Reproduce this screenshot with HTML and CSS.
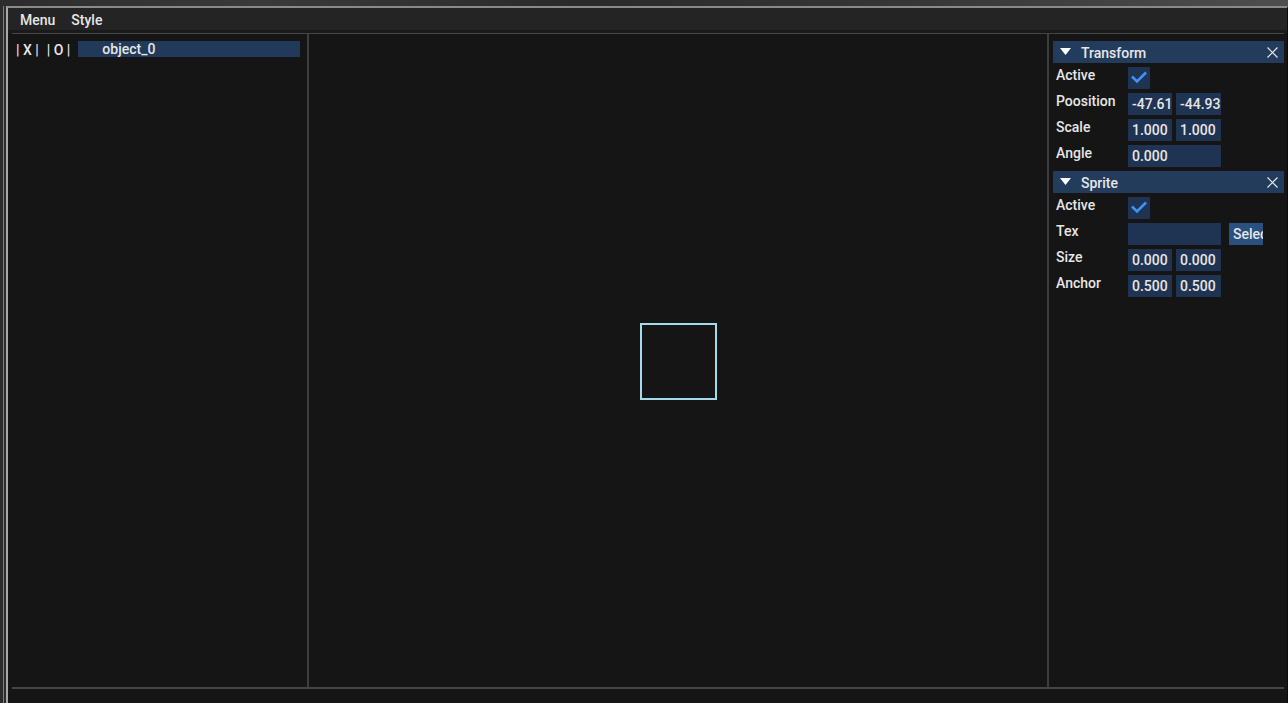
FILE: index.html
```html
<!DOCTYPE html>
<html lang="en">
<head>
    <meta charset="UTF-8">
    <meta name="viewport" content="width=device-width, initial-scale=1.0">
    <link rel="stylesheet" href="styles.css">
</head>
<body>
    <div class="frame">
        <div class="window">
            <div class="menubar">
                <span class="menu-item">Menu</span>
                <span class="menu-item">Style</span>
            </div>
            <div class="rule-gap"><div class="rule"></div></div>

            <div class="panels">
                <div class="panel hierarchy">
                    <div class="obj-row">
                        <span class="tool">| X |</span>
                        <span class="tool">| O |</span>
                        <div class="obj selected">object_0</div>
                    </div>
                </div>

                <div class="divider"></div>

                <div class="panel viewport">
                    <div class="sprite-box"></div>
                </div>

                <div class="divider"></div>

                <div class="panel inspector">
                    <div class="comp-head">
                        <svg class="arrow" width="12" height="8" viewBox="0 0 12 8"><polygon points="0,0 11,0 5.5,7" fill="#ffffff"/></svg>
                        <span class="comp-title">Transform</span>
                        <svg class="close" width="11" height="11" viewBox="0 0 11 11"><path d="M0.5 0.5 L10.5 10.5 M10.5 0.5 L0.5 10.5" stroke="#e8e8e8" stroke-width="1.2"/></svg>
                    </div>
                    <div class="prop">
                        <span class="prop-label">Active</span>
                        <div class="check"><svg width="22" height="22" viewBox="0 0 22 22"><path d="M4 9.5 L9 14.5 L18 5.5" fill="none" stroke="#3f93f3" stroke-width="2.6"/></svg></div>
                    </div>
                    <div class="prop">
                        <span class="prop-label">Poosition</span>
                        <div class="field w44">-47.61</div>
                        <div class="field w45">-44.932</div>
                    </div>
                    <div class="prop">
                        <span class="prop-label">Scale</span>
                        <div class="field w44">1.000</div>
                        <div class="field w45">1.000</div>
                    </div>
                    <div class="prop">
                        <span class="prop-label">Angle</span>
                        <div class="field w93">0.000</div>
                    </div>

                    <div class="comp-head">
                        <svg class="arrow" width="12" height="8" viewBox="0 0 12 8"><polygon points="0,0 11,0 5.5,7" fill="#ffffff"/></svg>
                        <span class="comp-title">Sprite</span>
                        <svg class="close" width="11" height="11" viewBox="0 0 11 11"><path d="M0.5 0.5 L10.5 10.5 M10.5 0.5 L0.5 10.5" stroke="#e8e8e8" stroke-width="1.2"/></svg>
                    </div>
                    <div class="prop">
                        <span class="prop-label">Active</span>
                        <div class="check"><svg width="22" height="22" viewBox="0 0 22 22"><path d="M4 9.5 L9 14.5 L18 5.5" fill="none" stroke="#3f93f3" stroke-width="2.6"/></svg></div>
                    </div>
                    <div class="prop">
                        <span class="prop-label">Tex</span>
                        <div class="field w93"></div>
                        <div class="btn">Select</div>
                    </div>
                    <div class="prop">
                        <span class="prop-label">Size</span>
                        <div class="field w44">0.000</div>
                        <div class="field w45">0.000</div>
                    </div>
                    <div class="prop">
                        <span class="prop-label">Anchor</span>
                        <div class="field w44">0.500</div>
                        <div class="field w45">0.500</div>
                    </div>
                </div>
            </div>

            <div class="rule-bottom"><div class="rule thick"></div></div>
            <div class="footer"></div>
        </div>
    </div>
</body>
</html>
```

FILE: styles.css
```css
* {
    margin: 0;
    padding: 0;
    box-sizing: border-box;
}

body {
    font-family: Roboto, "Liberation Sans", sans-serif;
    font-size: 14px;
    font-weight: 500;
    color: #e6e6e6;
    height: 100vh;
    overflow: hidden;
    padding: 6px 0 0 3px;
    background: linear-gradient(90deg, #2c2c2c 0%, #3a3a3a 20%, #2a2a2a 45%, #363636 70%, #4e4e4e 100%);
}

.frame {
    height: 100%;
    border-left: 1px solid #7e7e7e;
    padding-left: 2px;
}

.window {
    height: 100%;
    display: flex;
    flex-direction: column;
    background-color: #151515;
    border-top: 2px solid #8a8a8a;
    border-left: 2px solid #a8a8a8;
    border-right: 1px solid #0b0b0b;
}

.menubar {
    height: 22px;
    display: flex;
    align-items: center;
    gap: 16px;
    padding: 2px 0 0 12px;
    background-color: #242424;
}

.rule-gap {
    height: 4px;
    padding: 3px 3px 0 4px;
    background-color: #1a1a1a;
}

.rule {
    height: 1px;
    background-color: #454548;
}

.rule.thick {
    height: 2px;
}

.rule-bottom {
    padding: 0 3px 0 4px;
}

.footer {
    flex: 1;
}

.panels {
    height: 653px;
    display: flex;
}

.divider {
    width: 2px;
    background-color: #3d3d41;
}

.hierarchy {
    width: 299px;
    padding: 7px 7px 0 8px;
}

.obj-row {
    display: flex;
    align-items: center;
    gap: 8px;
    height: 16px;
}

.tool {
    padding-top: 1px;
}

.obj {
    flex: 1;
    height: 16px;
    line-height: 17px;
    padding-left: 24px;
}

.selected {
    background-color: #223a59;
}

.viewport {
    width: 738px;
    display: flex;
    align-items: center;
    justify-content: center;
    padding-top: 1px;
}

.sprite-box {
    width: 77px;
    height: 77px;
    border: 2px solid #a2dbec;
}

.inspector {
    width: 238px;
    padding: 7px 3px 0 4px;
    display: flex;
    flex-direction: column;
    gap: 4px;
}

.comp-head {
    height: 22px;
    display: flex;
    align-items: center;
    background-color: #233c5c;
    padding: 0 6px 0 7px;
}

.arrow {
    margin-right: 9px;
}

.comp-title {
    flex: 1;
    padding-top: 2px;
}

.prop {
    height: 22px;
    display: flex;
    gap: 4px;
    padding-left: 3px;
}

.prop-label {
    width: 68px;
    line-height: 16px;
    padding-top: 0;
}

.check {
    width: 22px;
    height: 22px;
    background-color: #1f3352;
}

.field {
    height: 22px;
    line-height: 23px;
    padding-left: 4px;
    background-color: #1f3352;
    overflow: hidden;
    white-space: nowrap;
}

.w44 { width: 44px; }
.w45 { width: 45px; }
.w93 { width: 93px; }

.btn {
    width: 34px;
    height: 22px;
    line-height: 23px;
    margin-left: 4px;
    padding-left: 4px;
    background-color: #2a5080;
    overflow: hidden;
    white-space: nowrap;
}
```
